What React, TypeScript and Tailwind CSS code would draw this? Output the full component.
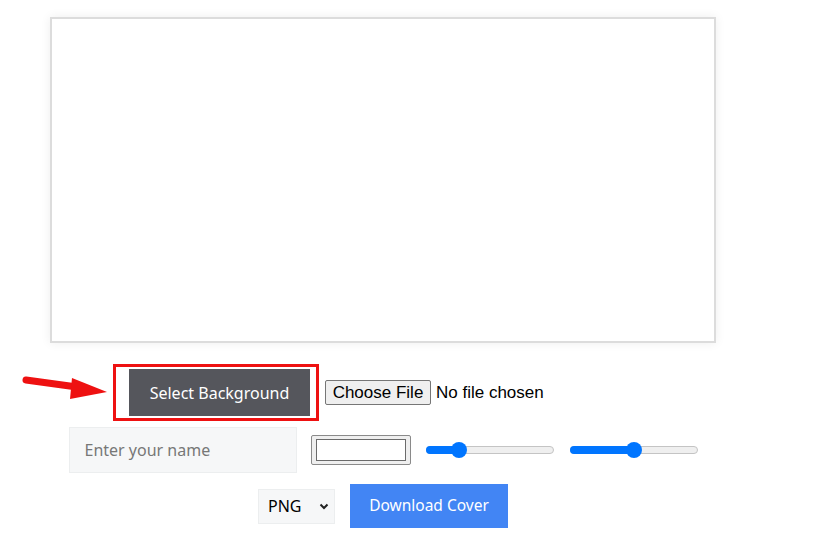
import React from "react";

function Slider({ pct }: { pct: number }) {
  return (
    <div className="relative w-[128px] h-[16px] flex items-center">
      <div className="w-full h-[8px] rounded-full bg-[#efefef] border border-[#c4c4c4]" />
      <div
        className="absolute left-0 h-[8px] rounded-l-full bg-[#0075ff]"
        style={{ width: `${pct}%` }}
      />
      <div
        className="absolute w-[16px] h-[16px] -ml-[8px] rounded-full bg-[#0075ff]"
        style={{ left: `${pct}%` }}
      />
    </div>
  );
}

export default function App() {
  return (
    <div className="w-[766px] flex flex-col items-center pt-[17px] bg-white font-['Noto_Sans',sans-serif]">
      {/* zone d'aperçu */}
      <div className="w-[666px] h-[326px] border-2 border-[#dcdcdc] bg-white shadow-[0_0_10px_rgba(0,0,0,0.07)]" />

      {/* ligne 1 : fond */}
      <div className="relative self-start ml-[113px] mt-[21px] flex items-center">
        <svg
          className="absolute -left-[98px] top-[1px]"
          width="100"
          height="40"
          viewBox="0 0 100 40"
        >
          <line x1="11" y1="15" x2="62" y2="22" stroke="#ee1111" strokeWidth="7" strokeLinecap="round" />
          <polygon points="57,13 92,27 55,34" fill="#ee1111" />
        </svg>
        <div className="border-[3px] border-[#ee1111] pl-[13px] pr-[6px] py-[2px]">
          <button className="w-[181px] h-[47px] bg-[#55565c] text-white text-[16px]">
            Select Background
          </button>
        </div>
        <div className="ml-[6px] flex items-center font-['Liberation_Sans',Arial,sans-serif] text-[17px] text-black">
          <span className="h-[25px] w-[106px] flex items-center justify-center bg-[#efefef] border border-[#767676] rounded-[2px]">
            Choose File
          </span>
          <span className="ml-[5px]">No file chosen</span>
        </div>
      </div>

      {/* ligne 2 : nom, couleur, curseurs */}
      <div className="mt-[6px] flex items-center">
        <div className="w-[228px] h-[46px] bg-[#f6f7f8] border border-[#eceeef] flex items-center pl-[15px] text-[16px] text-[#777]">
          Enter your name
        </div>
        <div className="ml-[14px] w-[100px] h-[30px] bg-[#efefef] border border-[#8a8a8a] rounded-[2px] p-[3px] px-[4px]">
          <div className="w-full h-full bg-white border border-[#6b6b6b]" />
        </div>
        <div className="ml-[15px]">
          <Slider pct={26} />
        </div>
        <div className="ml-[16px]">
          <Slider pct={50} />
        </div>
      </div>

      {/* ligne 3 : format et téléchargement */}
      <div className="mt-[11px] flex items-center">
        <div className="w-[77px] h-[35px] bg-[#f6f7f8] border border-[#eceeef] flex items-center justify-between pl-[9px] pr-[4px] text-[16px] text-black">
          <span>PNG</span>
          <svg width="12" height="12" viewBox="0 0 12 12">
            <path d="M2.5 4.5 L6 8 L9.5 4.5" stroke="#222" strokeWidth="2" fill="none" />
          </svg>
        </div>
        <button className="ml-[15px] w-[158px] h-[44px] bg-[#4285f4] text-white text-[15.5px]">
          Download Cover
        </button>
      </div>
    </div>
  );
}
